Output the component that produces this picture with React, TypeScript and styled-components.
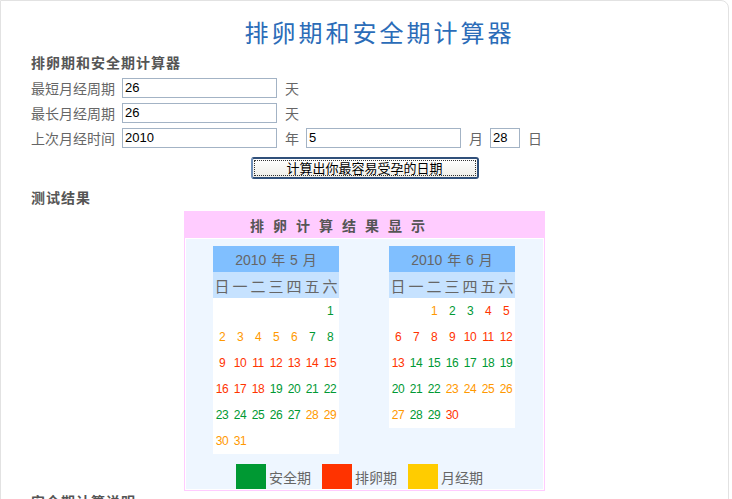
import { createGlobalStyle, styled } from "styled-components";

type DayKind = "safe" | "ovu" | "period";

interface MonthData {
  year: number;
  month: number;
  firstWeekday: number;
  days: number;
  ranges: [number, number, DayKind][];
}

const GlobalStyle = createGlobalStyle`
  html, body {
    margin: 0;
    padding: 0;
    background: #fff;
  }
  body {
    font-family: "Liberation Sans", "Noto Sans CJK SC", sans-serif;
    color: #666;
  }
`;

const kindColors: Record<DayKind, string> = {
  safe: "#009933",
  ovu: "#ff3300",
  period: "#ff9900",
};

const months: MonthData[] = [
  {
    year: 2010,
    month: 5,
    firstWeekday: 6,
    days: 31,
    ranges: [
      [1, 1, "safe"],
      [2, 6, "period"],
      [7, 8, "safe"],
      [9, 18, "ovu"],
      [19, 27, "safe"],
      [28, 31, "period"],
    ],
  },
  {
    year: 2010,
    month: 6,
    firstWeekday: 2,
    days: 30,
    ranges: [
      [1, 1, "period"],
      [2, 3, "safe"],
      [4, 13, "ovu"],
      [14, 22, "safe"],
      [23, 27, "period"],
      [28, 29, "safe"],
      [30, 30, "ovu"],
    ],
  },
];

const weekdays = ["日", "一", "二", "三", "四", "五", "六"];

const Page = styled.div`
  width: 729px;
  min-height: 560px;
  box-sizing: border-box;
  border: 1px solid #e2e2e2;
  border-radius: 0 8px 0 0;
`;

const Section = styled.div`
  padding-left: 30px;
`;

const Title = styled.h1`
  margin: 16px 0 0;
  padding-left: 30px;
  height: 30px;
  line-height: 30px;
  text-align: center;
  font-family: "Noto Sans CJK SC", sans-serif;
  font-size: 24px;
  font-weight: 400;
  letter-spacing: 3px;
  color: #2b6cb8;
`;

const Heading = styled.h2<{ $top?: number }>`
  margin: ${(p) => p.$top ?? 0}px 0 0;
  line-height: 25px;
  font-family: "Noto Sans CJK SC", sans-serif;
  font-size: 14px;
  font-weight: 700;
  letter-spacing: 1px;
  color: #555;
`;

const FormRow = styled.div`
  display: flex;
  align-items: center;
  height: 25px;
`;

const Label = styled.span`
  width: 91px;
  font-family: "Noto Sans CJK SC", sans-serif;
  font-size: 14px;
  color: #666;
`;

const Unit = styled.span`
  width: 14px;
  margin: 0 7px 0 8px;
  font-family: "Noto Sans CJK SC", sans-serif;
  font-size: 14px;
  color: #666;
`;

const Field = styled.input<{ $w?: number }>`
  width: ${(p) => p.$w ?? 155}px;
  height: 20px;
  box-sizing: border-box;
  margin: 0;
  padding: 0 2px;
  border: 1px solid #a3b3c5;
  font-family: "Liberation Sans", sans-serif;
  font-size: 13px;
  color: #000;
  outline: none;
`;

const Center = styled.div<{ $top?: number }>`
  display: flex;
  justify-content: center;
  margin-top: ${(p) => p.$top ?? 0}px;
`;

const CalcButton = styled.button`
  width: 228px;
  height: 22px;
  box-sizing: border-box;
  padding: 0;
  border: 2px solid #30507a;
  border-left-color: #6f8fb8;
  border-radius: 3px;
  background: linear-gradient(#ffffff, #efeee8);
  outline: 1px dotted #333;
  outline-offset: -4px;
  font-family: "Noto Sans CJK SC", sans-serif;
  font-size: 13px;
  line-height: 16px;
  color: #000;
`;

const ResultBox = styled.div`
  width: 361px;
  box-sizing: border-box;
  margin-top: 1px;
  border: 1px solid #ffccff;
  background: #fff;
`;

const ResultHeader = styled.div`
  height: 26px;
  line-height: 26px;
  padding-left: 65px;
  background: #ffccff;
  font-family: "Noto Sans CJK SC", sans-serif;
  font-size: 14px;
  font-weight: 700;
  letter-spacing: 9px;
  color: #555;
`;

const ResultBody = styled.div`
  margin: 1px;
  padding-top: 7px;
  background: #eef6ff;
`;

const Calendars = styled.div`
  display: flex;
  justify-content: center;
  align-items: flex-start;
  gap: 50px;
  padding-right: 1px;
`;

const Calendar = styled.div`
  width: 126px;
  display: grid;
  grid-template-columns: repeat(7, 18px);
  grid-auto-rows: 26px;
  background: #fff;
`;

const MonthTitle = styled.div`
  grid-column: 1 / -1;
  display: flex;
  align-items: center;
  justify-content: center;
  background: #80bfff;
  font-family: "Liberation Sans", "Noto Sans CJK SC", sans-serif;
  font-size: 14px;
  word-spacing: 1px;
  color: #666;
  white-space: pre;
`;

const WeekdayCell = styled.div`
  display: flex;
  align-items: center;
  justify-content: center;
  background: #c6e2ff;
  font-family: "Noto Sans CJK SC", sans-serif;
  font-size: 15px;
  color: #666;
`;

const DayCell = styled.div<{ $kind?: DayKind }>`
  display: flex;
  align-items: center;
  justify-content: center;
  font-family: "Liberation Sans", sans-serif;
  font-size: 12px;
  letter-spacing: -0.5px;
  color: ${(p) => (p.$kind ? kindColors[p.$kind] : "#666")};
`;

const Legend = styled.div`
  display: flex;
  align-items: center;
  margin-top: 10px;
  padding-left: 50px;
  gap: 11px;
`;

const LegendItem = styled.div`
  display: flex;
  align-items: center;
  gap: 3px;
  font-family: "Noto Sans CJK SC", sans-serif;
  font-size: 14px;
  color: #666;
`;

const Swatch = styled.span<{ $color: string }>`
  width: 30px;
  height: 25px;
  background: ${(p) => p.$color};
`;

const Note = styled.h2`
  margin: 0;
  line-height: 20px;
  font-family: "Noto Sans CJK SC", sans-serif;
  font-size: 14px;
  font-weight: 700;
  letter-spacing: 1px;
  color: #555;
`;

const kindOf = (m: MonthData, d: number): DayKind | undefined =>
  m.ranges.find(([a, b]) => d >= a && d <= b)?.[2];

const MonthCalendar = ({ data }: { data: MonthData }) => (
  <Calendar>
    <MonthTitle>{`${data.year} 年 ${data.month} 月`}</MonthTitle>
    {weekdays.map((w) => (
      <WeekdayCell key={w}>{w}</WeekdayCell>
    ))}
    {Array.from({ length: data.firstWeekday }, (_, i) => (
      <DayCell key={`blank-${i}`} />
    ))}
    {Array.from({ length: data.days }, (_, i) => (
      <DayCell key={i} $kind={kindOf(data, i + 1)}>
        {i + 1}
      </DayCell>
    ))}
  </Calendar>
);

const App = () => {
  return (
    <>
      <GlobalStyle />
      <Page>
        <Title>排卵期和安全期计算器</Title>
        <Section>
          <Heading $top={3}>排卵期和安全期计算器</Heading>
          <FormRow>
            <Label>最短月经周期</Label>
            <Field defaultValue="26" />
            <Unit>天</Unit>
          </FormRow>
          <FormRow>
            <Label>最长月经周期</Label>
            <Field defaultValue="26" />
            <Unit>天</Unit>
          </FormRow>
          <FormRow>
            <Label>上次月经时间</Label>
            <Field defaultValue="2010" />
            <Unit>年</Unit>
            <Field defaultValue="5" />
            <Unit>月</Unit>
            <Field $w={30} defaultValue="28" />
            <Unit>日</Unit>
          </FormRow>
        </Section>

        <Center $top={7}>
          <CalcButton>计算出你最容易受孕的日期</CalcButton>
        </Center>

        <Section>
          <Heading $top={6}>测试结果</Heading>
        </Section>

        <Center>
          <ResultBox>
            <ResultHeader>排卵计算结果显示</ResultHeader>
            <ResultBody>
              <Calendars>
                {months.map((m) => (
                  <MonthCalendar key={m.month} data={m} />
                ))}
              </Calendars>
              <Legend>
                <LegendItem>
                  <Swatch $color="#009933" />
                  安全期
                </LegendItem>
                <LegendItem>
                  <Swatch $color="#ff3300" />
                  排卵期
                </LegendItem>
                <LegendItem>
                  <Swatch $color="#ffcc00" />
                  月经期
                </LegendItem>
              </Legend>
            </ResultBody>
          </ResultBox>
        </Center>

        <Section>
          <Note>安全期计算说明</Note>
        </Section>
      </Page>
    </>
  );
};

export default App;
